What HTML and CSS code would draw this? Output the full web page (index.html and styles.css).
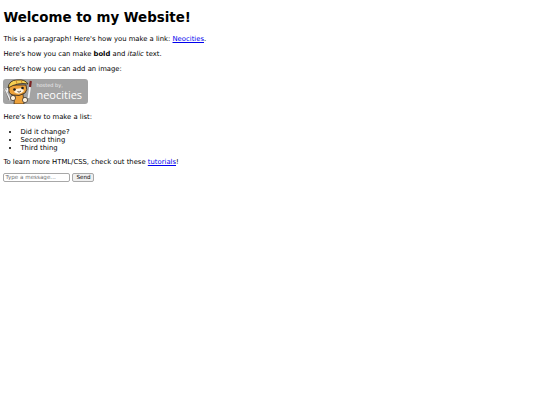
FILE: index.html
```html
<!DOCTYPE html>
<html lang="en">
<head>
  <meta charset="UTF-8">
  <meta name="viewport" content="width=device-width, initial-scale=1.0">
  <title>My Website</title>
  <link rel="stylesheet" href="styles.css">
</head>
<body>
  <h1>Welcome to my Website!</h1>
  <p>This is a paragraph! Here's how you make a link: <a href="#">Neocities</a>.</p>
  <p>Here's how you can make <strong>bold</strong> and <em>italic</em> text.</p>
  <p>Here's how you can add an image:</p>
  <div class="badge">
    <svg class="cat" viewBox="0 0 33 25" width="33" height="25">
      <!-- body -->
      <path d="M12 15 L20 15 L21 25 L11 25 Z" fill="#eda13a" stroke="#2b2118" stroke-width=".7"/>
      <!-- wrench -->
      <path d="M1 10 L3 13 L5 11 L4 9 M3 13 L7 21" fill="none" stroke="#f0f0f0" stroke-width="1.8"/>
      <path d="M1 10 L3 14 L6 21" fill="none" stroke="#2b2118" stroke-width=".5"/>
      <!-- head -->
      <path d="M6 9 Q5 15 10 16 Q16 18 22 14 Q25 11 23 6 L6 6 Z" fill="#eda13a" stroke="#2b2118" stroke-width=".8"/>
      <path d="M11 13 Q16 17 21 12 L19 9 L13 10 Z" fill="#fff3df"/>
      <circle cx="11.5" cy="10.5" r="1.3" fill="#1c1c1c"/>
      <circle cx="19.5" cy="9" r="1.3" fill="#1c1c1c"/>
      <path d="M14.5 12.5 Q16 14 18 12" fill="none" stroke="#1c1c1c" stroke-width=".8"/>
      <!-- hard hat -->
      <path d="M5 9 Q6 1 14 1 Q22 0 25 5 Q15 3 5 9 Z" fill="#f5cf52" stroke="#2b2118" stroke-width=".8"/>
      <path d="M13 1 L14 5 M18 1 L19 4" stroke="#c9842a" stroke-width=".9"/>
      <!-- brush -->
      <path d="M27 8 L25.5 19" stroke="#f4f4f4" stroke-width="1.8"/>
      <path d="M27.8 2 L27 8" stroke="#7c2222" stroke-width="2.2"/>
      <!-- paws -->
      <circle cx="10" cy="19" r="2.6" fill="#fff3df" stroke="#2b2118" stroke-width=".7"/>
      <circle cx="22" cy="21" r="2.6" fill="#fff3df" stroke="#2b2118" stroke-width=".7"/>
    </svg>
    <div class="badge-text">
      <span class="hosted">hosted by,</span>
      <span class="brand">neocities</span>
    </div>
  </div>
  <p>Here's how to make a list:</p>
  <ul>
    <li>Did it change?</li>
    <li>Second thing</li>
    <li>Third thing</li>
  </ul>
  <p>To learn more HTML/CSS, check out these <a href="#">tutorials</a>!</p>
  <form class="message-form" onsubmit="return false">
    <input type="text" placeholder="Type a message...">
    <button>Send</button>
  </form>
</body>
</html>
```

FILE: styles.css
```css
body { margin: 3.4px; background: #fff; color: #000; font-family: "DejaVu Sans", sans-serif; font-size: 6.83px; }
h1 { font-size: 13.4px; margin: 7px 0 10px; }
p { margin: 6.75px 0; }
a { color: #0000ee; }
.badge { display: flex; width: 85px; height: 25px; margin: -1px 0 9px; background: #a3a3a3; border-radius: 3px; }
.cat { flex: none; }
.badge-text { display: flex; flex-direction: column; padding: 3px 0 0 0; color: #fff; }
.hosted { font-size: 5px; line-height: 6px; color: #eee; }
.brand { margin-top: 1px; font-size: 11px; line-height: 11px; font-family: "Open Sans", sans-serif; }
ul { margin: 7.75px 0 -1px; padding-left: 17px; }
.message-form { display: flex; align-items: center; gap: 2px; margin-top: 6px; }
input { width: 63px; height: 7px; box-sizing: content-box; margin: 0; padding: 0 1px; font-family: "DejaVu Sans", sans-serif; font-size: 5.6px; border: 1px solid #a8a8a8; border-radius: 2px; }
input::placeholder { color: #757575; }
button { height: 7px; box-sizing: content-box; padding: 0 3px; font-family: "DejaVu Sans", sans-serif; font-size: 5.6px; background: #efefef; border: 1px solid #a8a8a8; border-radius: 2px; }
```
